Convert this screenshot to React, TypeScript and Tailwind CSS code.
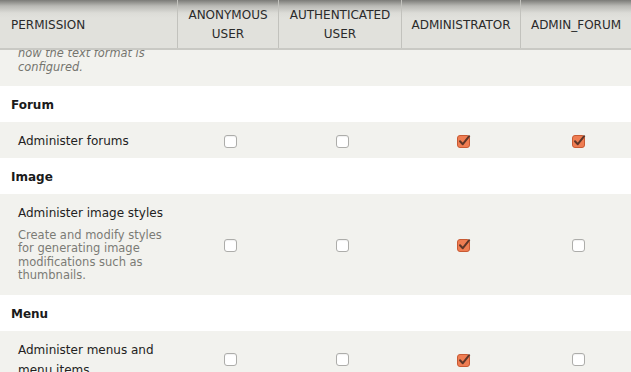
import React from "react";

const cols = "grid grid-cols-[177px_101px_123px_119px_111px]";

type Perm = { title: string; desc?: string; checks: boolean[] };
type Section = { name: string; perms: Perm[] };

const sections: Section[] = [
  {
    name: "Forum",
    perms: [{ title: "Administer forums", checks: [false, false, true, true] }],
  },
  {
    name: "Image",
    perms: [
      {
        title: "Administer image styles",
        desc: "Create and modify styles for generating image modifications such as thumbnails.",
        checks: [false, false, true, false],
      },
    ],
  },
  {
    name: "Menu",
    perms: [{ title: "Administer menus and menu items", checks: [false, false, true, false] }],
  },
];

function Checkbox({ checked }: { checked: boolean }) {
  if (!checked) {
    return <span className="block w-[13px] h-[13px] rounded-[3px] border border-[#adadaa] bg-white shadow-[inset_0_1px_1px_rgba(0,0,0,0.06)]" />;
  }
  return (
    <svg width="15" height="14" viewBox="0 0 15 14" className="block ml-[2px]">
      <rect x="0.5" y="1.5" width="12" height="12" rx="2.5" fill="#ef7d52" stroke="#c85a33" />
      <path d="M3 7.2 L5.8 10.2 L12.2 2.2" fill="none" stroke="#5e3628" strokeWidth="2" strokeLinecap="round" strokeLinejoin="round" />
    </svg>
  );
}

export default function App() {
  return (
    <div className="w-[631px] h-[372px] overflow-hidden bg-white text-[#333] font-['DejaVu_Sans',Verdana,sans-serif]">
      {/* table header (sticky) */}
      <div className={`${cols} h-[50px] border-b-2 border-[#c9c9c4] bg-[linear-gradient(to_bottom,#7a7a77_0px,#b9b9b5_6px,#dcdcd7_13px,#e1e1dc_18px)] text-[12px] leading-[19px] text-[#2a2a2a]`}>
        <div className="flex items-center pl-[11px] pt-[2px]">PERMISSION</div>
        <div className="flex items-center justify-center text-center border-l border-[#c2c2bd] pt-[2px]">ANONYMOUS<br />USER</div>
        <div className="flex items-center justify-center text-center border-l border-[#c2c2bd] pt-[2px]">AUTHENTICATED<br />USER</div>
        <div className="flex items-center justify-center text-center border-l border-[#c2c2bd] pt-[2px]">ADMINISTRATOR</div>
        <div className="flex items-center justify-center text-center border-l border-[#c2c2bd] pt-[2px]">ADMIN_FORUM</div>
      </div>

      {/* tail of the previous row, scrolled under the header */}
      <div className="h-[36px] overflow-hidden bg-[#f2f2ee]">
        <div className="-mt-[4px] pl-[18px] w-[177px] pr-[4px] text-[11.4px] leading-[14px] italic text-[#75756f]">
          how the text format is
          <br />
          configured.
        </div>
      </div>

      {sections.map((s) => (
        <div key={s.name}>
          <div className="pt-[9px] pb-[7px] pl-[11px] text-[12px] leading-[20px] font-bold text-[#1a1a1a]">{s.name}</div>
          {s.perms.map((p) => (
            <div key={p.title} className={`${cols} bg-[#f2f2ee]`}>
              <div className={`pl-[18px] pr-[8px] pt-[9px] ${p.desc ? "pb-[12px]" : "pb-[7px]"}`}>
                <div className="text-[12px] leading-[20px] text-[#222]">{p.title}</div>
                {p.desc && (
                  <div className="mt-[6px] text-[11.5px] leading-[13.4px] text-[#7b7b75]">{p.desc}</div>
                )}
              </div>
              {p.checks.map((c, i) => (
                <div key={i} className="flex items-center justify-center pl-[5px] pt-[2px]">
                  <Checkbox checked={c} />
                </div>
              ))}
            </div>
          ))}
        </div>
      ))}
    </div>
  );
}
